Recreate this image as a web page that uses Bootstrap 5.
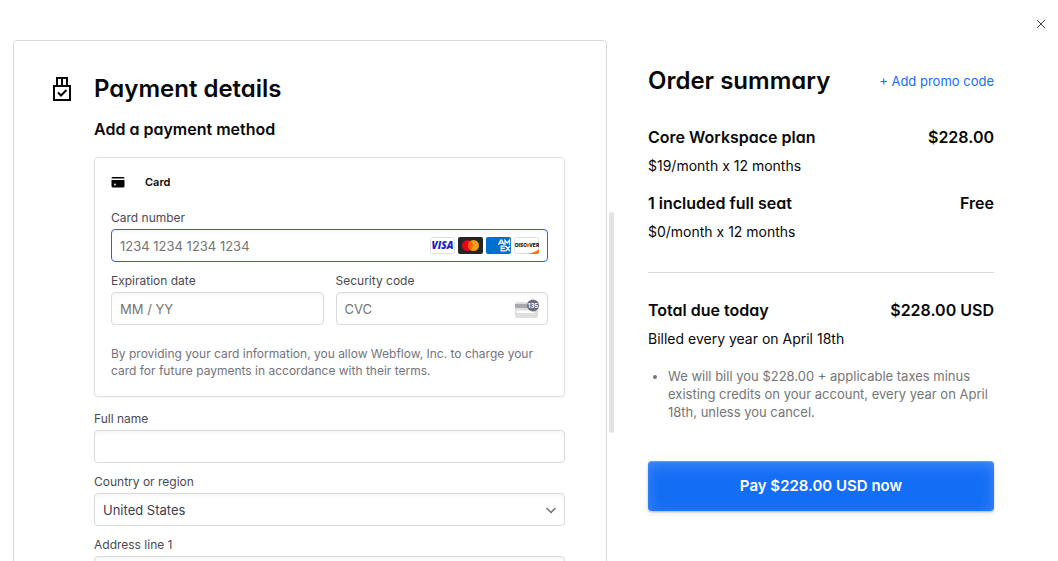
<!DOCTYPE html>
<html lang="en">
<head>
<meta charset="utf-8">
<meta name="viewport" content="width=device-width, initial-scale=1">
<title>Payment details</title>
<link href="https://cdn.jsdelivr.net/npm/bootstrap@5.3.0/dist/css/bootstrap.min.css" rel="stylesheet">
<style>
  body { font-family: Inter, "Liberation Sans", sans-serif; font-size: 14px; line-height: 20px; color: #080808; background: #fff; }
  .checkout { height: 100vh; display: grid; grid-template-columns: minmax(0, 602fr) minmax(0, 443fr); padding: 40px 0 0 13px; overflow: hidden; }
  .pane { overflow: hidden; padding-right: 8px; }
  .scroll-thumb { top: 172px; right: 1px; width: 5px; height: 221px; border-radius: 3px; background: #e3e3e3; }
  .panel { border: 1px solid #d8d8d8; border-radius: 4px; padding: 32px 41px 40px 38px; gap: 22px; }
  .panel-icon { width: 20px; height: 26px; margin-top: 3px; }
  .display-title { font-size: 24px; line-height: 32px; font-weight: 600; font-feature-settings: "cv11"; }
  .sub-title { font-size: 16px; line-height: 24px; font-weight: 600; font-feature-settings: "cv11"; }
  .pay-box { border: 1px solid #e0e0e0; border-radius: 4px; padding: 16px 16px 17px; margin: 16px 0 13px; box-shadow: 0 1px 3px rgba(0,0,0,.05); }
  .pay-tab { font-size: 11px; line-height: 16px; font-weight: 600; gap: 20px; margin-bottom: 19px; }
  .form-label { display: block; font-size: 12px; line-height: 18px; margin-bottom: 2px; color: #4a4a55; }
  .form-control, .form-select { height: 33px; padding: 0 8px; font-size: 13px; line-height: 20px; border: 1px solid #dadada; border-radius: 4px; color: #40404a; background-color: #fff; box-shadow: inset 0 4px 5px -3px rgba(0,0,0,.06); }
  .form-control::placeholder { color: #757575; }
  .form-control.is-active { border-color: #146ef5; }
  .form-select { background-image: url("data:image/svg+xml,%3Csvg xmlns='http://www.w3.org/2000/svg' viewBox='0 0 12 12'%3E%3Cpath d='M1.500 4 6 8.500 10.500 4' fill='none' stroke='%2366666f' stroke-width='1.300'/%3E%3C/svg%3E"); background-size: 12px 12px; background-position: right 7px center; }
  .field { margin-bottom: 10px; }
  .split { column-gap: 12px; }
  .in-input { top: 0; right: 9px; height: 33px; gap: 3px; pointer-events: none; }
  .terms { font-size: 12px; line-height: 17px; color: #73737d; margin: 20px 0 0; }
  .summary { padding: 25px 64px 0 33px; }
  .summary-head { margin-bottom: 28px; }
  .link-blue { color: #146ef5; font-size: 13px; }
  .line-note { margin: 7px 0 15px; }
  .divider { height: 1px; background: #d8d8d8; margin: 30px 0 25px; }
  .fine-print { font-size: 13px; line-height: 18px; color: #757575; padding-left: 20px; margin: 18px 0 40px; }
  .btn-pay { height: 50px; border: 0; border-radius: 4px; color: #fff; background: #146ef5; font-size: 15px; font-weight: 600; box-shadow: inset 0 1px 1px rgba(255,255,255,.2), inset 0 4px 14px rgba(255,255,255,.2), 0 1px 2px rgba(0,0,0,.25), 0 3px 5px rgba(0,0,0,.08); }
  .btn-pay:hover { background: #0f62de; color: #fff; }
  .close-btn { top: 18px; right: 11px; width: 12px; height: 12px; }
</style>
</head>
<body>
<button type="button" class="close-btn btn p-0 border-0 position-absolute d-flex" aria-label="Close">
  <svg width="12" height="12" viewBox="0 0 12 12" aria-hidden="true"><path d="M2 2 10 10M10 2 2 10" stroke="#444" stroke-width="1"/></svg>
</button>
<main class="checkout">
  <div class="pane position-relative">
    <section class="panel d-flex align-items-start">
      <svg class="panel-icon flex-shrink-0" viewBox="0 0 20 26" fill="none" stroke="#080808" stroke-width="2" aria-hidden="true">
        <path d="M2 10h16v14H2zM5 10V2h10v8M10 2v8"/><path d="m6 16.500 3 3 5.500-5.500"/>
      </svg>
      <form class="flex-grow-1" onsubmit="return false">
        <h1 class="display-title m-0">Payment details</h1>
        <h2 class="sub-title mb-0 mt-2 pt-1">Add a payment method</h2>
        <div class="pay-box">
          <div class="pay-tab d-flex align-items-center">
            <svg width="14" height="12" viewBox="0 0 14 12" aria-hidden="true"><path d="M1.500 1h11A1.500 1.500 0 0 1 13.500 2.500H.5A1.500 1.500 0 0 1 1.500 1zM.5 4h13v6a1.500 1.500 0 0 1-1.500 1.500H2A1.500 1.500 0 0 1 .5 10z" fill="#000"/><circle cx="4" cy="8.500" r=".9" fill="#fff"/></svg>
            <span>Card</span>
          </div>
          <div class="field">
            <label class="form-label" for="number">Card number</label>
            <div class="position-relative">
              <input class="form-control is-active" id="number" placeholder="1234 1234 1234 1234" inputmode="numeric">
              <div class="in-input position-absolute d-flex align-items-center" aria-hidden="true">
                <svg width="25" height="17" viewBox="0 0 25 17"><rect x=".5" y=".5" width="24" height="16" rx="2" fill="#fff" stroke="#e0e0e4"/><text x="12.500" y="12" text-anchor="middle" font-family="Open Sans" font-size="10" font-weight="800" font-style="italic" fill="#1a1fc8">VISA</text></svg>
                <svg width="25" height="17" viewBox="0 0 25 17"><rect width="25" height="17" rx="2" fill="#252525"/><circle cx="9.500" cy="8.500" r="5.500" fill="#eb001b"/><circle cx="15.500" cy="8.500" r="5.500" fill="#f79e1b"/><path d="M12.500 3.900a5.500 5.500 0 0 1 0 9.200 5.500 5.500 0 0 1 0-9.200z" fill="#ff5f00"/></svg>
                <svg width="25" height="17" viewBox="0 0 25 17"><rect width="25" height="17" rx="2" fill="#016fd0"/><g fill="none" stroke="#fff" stroke-width="1.200"><path d="m12.500 7.800 2.300-4.600h1l2.200 4.600M14 6.200h3M19 7.800V3.200L21.200 6l2.300-2.800v4.600M15.200 9.200h4.300M15.200 8.600v5.300h4.300M15.200 11.300h3.600M19.800 9l4.200 5M24 9l-4.200 5"/></g></svg>
                <svg width="25" height="17" viewBox="0 0 25 17"><rect x=".5" y=".5" width="24" height="16" rx="2" fill="#fff" stroke="#e0e0e4"/><path d="M25 12v3a2 2 0 0 1-2 2H13q8-1.500 12-5z" fill="#f27712"/><text x="1" y="10" font-family="Inter" font-size="5" font-weight="800" fill="#111">DISC</text><circle cx="13.500" cy="8.200" r="1.800" fill="#f27712"/><text x="15" y="10" font-family="Inter" font-size="5" font-weight="800" fill="#111">VER</text></svg>
              </div>
            </div>
          </div>
          <div class="split d-flex">
            <div class="col">
              <label class="form-label" for="expiry">Expiration date</label>
              <input class="form-control" id="expiry" placeholder="MM / YY">
            </div>
            <div class="col">
              <label class="form-label" for="cvc">Security code</label>
              <div class="position-relative">
                <input class="form-control" id="cvc" placeholder="CVC">
                <div class="in-input position-absolute d-flex align-items-center" aria-hidden="true">
                  <svg width="24" height="20" viewBox="0 0 24 20"><rect x="0" y="3" width="23" height="16" rx="2" fill="#dedee1"/><path d="M0 5h23v4H0z" fill="#a8a8ae"/><path d="M2 11.500h17v2.500H2z" fill="#fff"/><circle cx="18" cy="6.500" r="6" fill="#6d6e78"/><text x="18" y="9" text-anchor="middle" font-family="Inter" font-size="6" font-weight="700" fill="#fff">135</text></svg>
                </div>
              </div>
            </div>
          </div>
          <p class="terms">By providing your card information, you allow Webflow, Inc. to charge your card for future payments in accordance with their terms.</p>
        </div>
        <div class="field">
          <label class="form-label" for="name">Full name</label>
          <input class="form-control" id="name">
        </div>
        <div class="field">
          <label class="form-label" for="country">Country or region</label>
          <select class="form-select" id="country"><option>United States</option></select>
        </div>
        <div class="field">
          <label class="form-label" for="address">Address line 1</label>
          <input class="form-control" id="address">
        </div>
      </form>
    </section>
    <div class="scroll-thumb position-absolute"></div>
  </div>
  <aside class="summary">
    <div class="summary-head d-flex justify-content-between align-items-center">
      <h2 class="display-title m-0">Order summary</h2>
      <a class="link-blue text-decoration-none" href="#">+ Add promo code</a>
    </div>
    <div class="sub-title d-flex justify-content-between"><span>Core Workspace plan</span><span>$228.00</span></div>
    <p class="line-note">$19/month x 12 months</p>
    <div class="sub-title d-flex justify-content-between"><span>1 included full seat</span><span>Free</span></div>
    <p class="line-note">$0/month x 12 months</p>
    <div class="divider"></div>
    <div class="sub-title d-flex justify-content-between"><span>Total due today</span><span>$228.00 USD</span></div>
    <p class="line-note">Billed every year on April 18th</p>
    <ul class="fine-print"><li>We will bill you $228.00 + applicable taxes minus existing credits on your account, every year on April 18th, unless you cancel.</li></ul>
    <button type="button" class="btn btn-pay w-100">Pay $228.00 USD now</button>
  </aside>
</main>
<script src="https://cdn.jsdelivr.net/npm/bootstrap@5.3.0/dist/js/bootstrap.bundle.min.js"></script>
</body>
</html>
